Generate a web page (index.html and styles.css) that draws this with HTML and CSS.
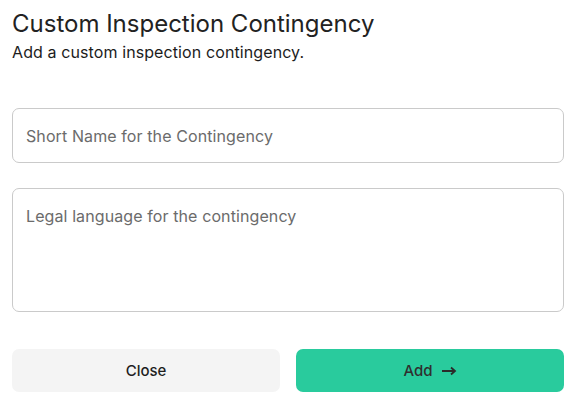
FILE: index.html
```html
<!DOCTYPE html>
<html lang="en">
<head>
<meta charset="utf-8">
<title>Custom Inspection Contingency</title>
<link rel="stylesheet" href="styles.css">
</head>
<body>
<div class="dialog">
  <header class="head">
    <h2 class="title">Custom Inspection Contingency</h2>
    <p class="subtitle">Add a custom inspection contingency.</p>
  </header>
  <form class="form">
    <input class="field" type="text" placeholder="Short Name for the Contingency">
    <textarea class="field area" placeholder="Legal language for the contingency"></textarea>
    <div class="actions">
      <button type="button" class="btn btn-close">Close</button>
      <button type="button" class="btn btn-add">Add
        <svg class="arrow" width="16" height="10" viewBox="0 0 16 10" aria-hidden="true"><path d="M1 5h13M10 1.5 14 5l-4 3.5" fill="none" stroke="#2b2b2b" stroke-width="1.8"/></svg>
      </button>
    </div>
  </form>
</div>
</body>
</html>
```
FILE: styles.css
```css
* { box-sizing: border-box; }
html, body { margin: 0; padding: 0; background: #fff; }
body {
  font-family: Inter, "Noto Sans", "Liberation Sans", sans-serif;
  color: #1f1f1f;
}
.dialog {
  width: 552px;
  margin-left: 12px;
  padding-top: 8px;
}
.head { display: flex; flex-direction: column; gap: 1px; }
.title {
  margin: 0;
  font-size: 24px;
  line-height: 32px;
  font-weight: 400;
  color: #222;
}
.subtitle {
  margin: 0;
  font-size: 16px;
  line-height: 22px;
  letter-spacing: 0.1px;
  color: #1c1c1c;
}
.form {
  margin-top: 45px;
  display: flex;
  flex-direction: column;
}
.field {
  display: block;
  width: 100%;
  height: 55px;
  border: 1px solid #cacaca;
  border-radius: 7px;
  padding: 0 13px;
  font-family: inherit;
  font-size: 16px;
  letter-spacing: 0.1px;
  color: #222;
  background: #fff;
  outline: none;
}
.field::placeholder { color: #6b6b6b; }
.area {
  margin-top: 25px;
  height: 124px;
  padding: 15px 13px;
  line-height: 24px;
  resize: none;
}
.actions {
  margin-top: 37px;
  display: grid;
  grid-template-columns: 1fr 1fr;
  gap: 16px;
}
.btn {
  height: 43px;
  border: none;
  border-radius: 7px;
  font-family: inherit;
  font-size: 15px;
  font-weight: 500;
  display: flex;
  align-items: center;
  justify-content: center;
  gap: 8px;
  cursor: pointer;
}
.btn-close { background: #f4f4f4; color: #1e1e1e; }
.btn-add { background: #29cb9d; color: #2f2f2f; }
.arrow { display: block; }
```
